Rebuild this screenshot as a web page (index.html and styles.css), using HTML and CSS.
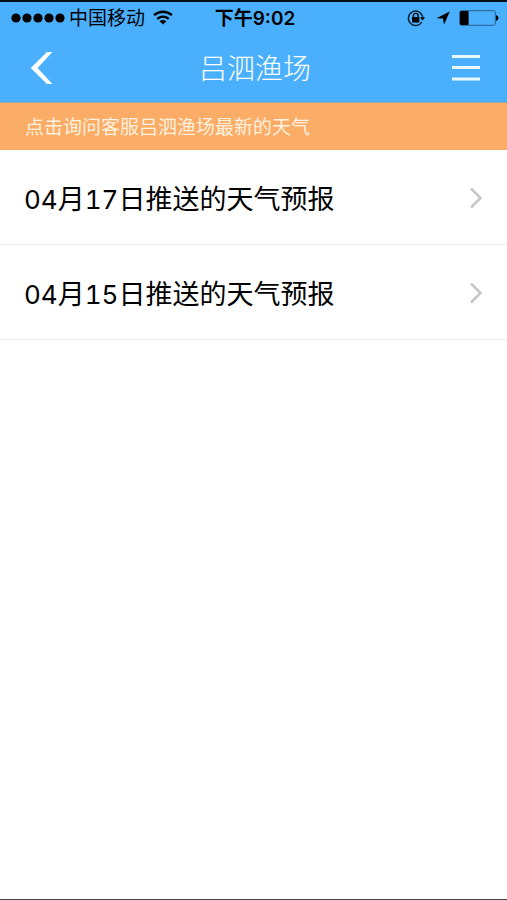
FILE: index.html
```html
<!DOCTYPE html>
<html lang="zh-CN">
<head>
<meta charset="utf-8">
<meta name="viewport" content="width=device-width, initial-scale=1">
<title>吕泗渔场</title>
<link rel="stylesheet" href="styles.css">
</head>
<body>
<header class="top">
  <div class="status">
    <div class="status-left">
      <svg class="signal" width="54" height="12" viewBox="0 0 54 12" aria-hidden="true"><circle cx="5" cy="6" r="4.6"/><circle cx="16" cy="6" r="4.6"/><circle cx="27" cy="6" r="4.6"/><circle cx="38" cy="6" r="4.6"/><circle cx="49" cy="6" r="4.6"/></svg>
      <span class="carrier">中国移动</span>
      <svg width="20" height="16" viewBox="0 0 20 16" aria-hidden="true"><path d="M1 5.2Q10-1.8 19 5.2M4.2 8.8Q10 4.4 15.8 8.8" fill="none" stroke="#000" stroke-width="2.3"/><path d="M6.6 11.2Q10 8.6 13.4 11.2L10 14.6Z"/></svg>
    </div>
    <time class="clock">下午9:02</time>
    <div class="status-right">
      <svg width="18" height="18" viewBox="0 0 18 18" aria-hidden="true"><path d="M14.8 13A7.2 7.2 0 1 1 15.7 8" fill="none" stroke="#0a2438" stroke-width="1.4"/><path d="M13 8.2h5l-2.4 3.2Z"/><rect x="5" y="8" width="7.4" height="5.4" rx=".6"/><path d="M6.3 8.4V6.8a2.4 2.4 0 0 1 4.8 0v1.6" fill="none" stroke="#000" stroke-width="1.3"/></svg>
      <svg class="locate" width="14" height="14" viewBox="0 0 14 14" aria-hidden="true"><path d="M13.8.4 8 13.8 7 7.6.4 7.2Z"/></svg>
      <svg width="40" height="16" viewBox="0 0 40 16" aria-hidden="true"><rect x=".7" y=".7" width="35.6" height="14.6" rx="2" fill="none" stroke="#23608d" stroke-width="1"/><rect x="1" y="1" width="8.6" height="14" rx="1"/><path d="M37 5q2.6 1 2.6 3T37 11Z"/></svg>
    </div>
  </div>
  <nav class="navbar">
    <button class="nav-button" type="button" aria-label="返回"><svg width="24" height="34" viewBox="0 0 24 34"><path d="M17 1H22.4L7.6 17 22.4 33H17L.8 17Z" fill="#fff"/></svg></button>
    <h1 class="title">吕泗渔场</h1>
    <button class="nav-button nav-menu" type="button" aria-label="菜单"><svg width="28" height="28" viewBox="0 0 28 28"><path d="M0 2.5H28M0 13.5H28M0 25H28" stroke="#e9f9ff" stroke-width="3"/></svg></button>
  </nav>
</header>
<a class="notice" href="#service">点击询问客服吕泗渔场最新的天气</a>
<main>
  <ul class="forecasts">
    <li><a class="forecast" href="#0417"><span class="forecast-name"><span class="num">04</span>月<span class="num">17</span>日推送的天气预报</span><svg width="14" height="22" viewBox="0 0 14 22" aria-hidden="true"><path d="M2 1.5 11.5 11 2 20.5" fill="none" stroke="#c7c7c7" stroke-width="2.6"/></svg></a></li>
    <li><a class="forecast" href="#0415"><span class="forecast-name"><span class="num">04</span>月<span class="num">15</span>日推送的天气预报</span><svg width="14" height="22" viewBox="0 0 14 22" aria-hidden="true"><path d="M2 1.5 11.5 11 2 20.5" fill="none" stroke="#c7c7c7" stroke-width="2.6"/></svg></a></li>
  </ul>
</main>
</body>
</html>
```
FILE: styles.css
```css
* {
  box-sizing: border-box;
}

body {
  display: flex;
  flex-direction: column;
  min-height: 100vh;
  margin: 0;
  border-bottom: 1px solid #444;
  background: #fff;
  color: #000;
  font-family: Inter, "Noto Sans CJK SC", sans-serif;
}

svg {
  display: block;
  flex: none;
}

.top {
  border-top: 2px solid #071018;
  border-bottom: 1px solid #a0a5a4;
  background: #4ab0fe;
}

.status {
  display: grid;
  grid-template-columns: 1fr auto 1fr;
  align-items: center;
  height: 32px;
  padding: 0 8px 0 11px;
}

.status-left,
.status-right {
  display: flex;
  align-items: center;
}

.carrier {
  margin: 0 8px 0 4px;
  padding-top: 2px;
  font-size: 19px;
  line-height: 24px;
}

.clock {
  padding-top: 2px;
  font-size: 19px;
  font-weight: 600;
  line-height: 24px;
}

.status-right {
  justify-content: flex-end;
}

.locate {
  margin: 0 9px 0 11px;
}

.navbar {
  display: grid;
  grid-template-columns: 1fr auto 1fr;
  align-items: center;
  height: 68px;
  padding: 0 27px 0 30px;
}

.nav-button {
  justify-self: start;
  padding: 0;
  border: 0;
  background: none;
}

.nav-menu {
  justify-self: end;
}

.title {
  margin: 0;
  padding-top: 2px;
  color: #fff;
  font-size: 28px;
  font-weight: 300;
  line-height: 40px;
}

.notice {
  padding: 11px 25px 8px;
  background: #fbac66;
  color: #fff1df;
  font-size: 19px;
  line-height: 28px;
  text-decoration: none;
}

.forecasts {
  margin: 0;
  padding: 0;
  list-style: none;
}

.forecast {
  display: flex;
  align-items: center;
  justify-content: space-between;
  padding: 26px 24px 24px;
  border-bottom: 1px solid #ebebeb;
  color: #000;
  text-decoration: none;
}

.forecast-name {
  padding-top: 4px;
  font-size: 27px;
  line-height: 40px;
}

.num {
  font-size: 26px;
  font-variant-numeric: tabular-nums;
}
```
